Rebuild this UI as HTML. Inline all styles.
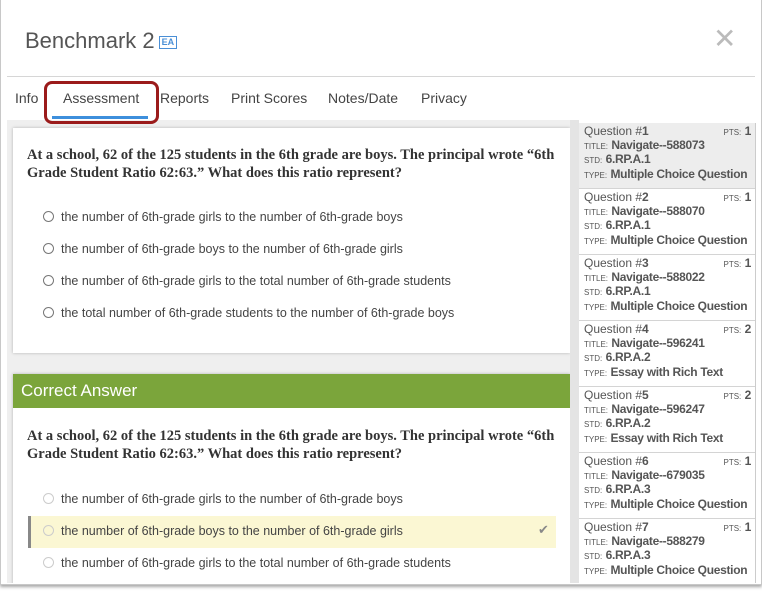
<!DOCTYPE html>
<html><head><meta charset="utf-8"><style>
*{margin:0;padding:0;box-sizing:border-box}
body{width:762px;height:591px;background:#fff;font-family:"Liberation Sans",sans-serif;position:relative;overflow:hidden}
.abs{position:absolute}
.modal{left:0;top:0;width:762px;height:585px;border:1px solid #c8c8c8;border-top:none;box-shadow:0 2px 3px rgba(0,0,0,.35);background:#fff}
.title{left:25px;top:28px;font-size:22px;color:#555}
.ea{display:inline-block;border:1.5px solid #4a8fd6;color:#4a8fd6;font-size:9px;font-weight:bold;padding:0 2px;vertical-align:3px;margin-left:4px;line-height:11px}
.close{left:713px;top:22px;font-size:28px;color:#bbb;font-weight:300}
.hline{left:7px;top:76px;width:748px;height:1px;background:#d6d6d6}
.tab{top:90px;font-size:14px;color:#444}
.clip{left:7px;top:120px;width:570px;height:463px;background:#efefef;overflow:hidden}
.card{background:#fff;box-shadow:0 0 3px rgba(0,0,0,.25)}
.q{font-family:"Liberation Serif",serif;font-weight:bold;font-size:14.5px;color:#333;line-height:18px}
.opt{font-size:12.5px;color:#444;position:absolute;left:29px;white-space:nowrap}
.radio{position:absolute;left:-18px;top:1px;width:11px;height:11px;border:1px solid #777;border-radius:50%}
.side{left:579px;top:123px;width:177px;height:460px;border-right:1px solid #ccc;overflow:hidden}
.item{height:66px;border-bottom:1px solid #d4d4d4;padding:2px 5px;font-size:12px;color:#555;line-height:13.5px;position:relative;white-space:nowrap;overflow:hidden}
.item b{color:#555;font-size:12px;letter-spacing:-0.3px}
.sm{font-size:8px;font-weight:normal}
.pts{position:absolute;right:4px;top:2px;font-size:12px}
</style></head><body>
<div class="abs modal"></div>
<div class="abs title">Benchmark 2<span class="ea">EA</span></div>
<div class="abs close">✕</div>
<div class="abs hline"></div>
<div class="abs tab" style="left:15px">Info</div>
<div class="abs tab" style="left:63px">Assessment</div>
<div class="abs tab" style="left:160px">Reports</div>
<div class="abs tab" style="left:231px">Print Scores</div>
<div class="abs tab" style="left:328px">Notes/Date</div>
<div class="abs tab" style="left:421px">Privacy</div>
<div class="abs clip">
<div class="abs card" style="left:6px;top:8px;width:557px;height:225px">
 <div class="q abs" style="left:14px;top:18px;width:540px">At a school, 62 of the 125 students in the 6th grade are boys. The principal wrote “6th Grade Student Ratio 62:63.” What does this ratio represent?</div>
 <div class="opt" style="left:48px;top:82px"><span class="radio"></span>the number of 6th-grade girls to the number of 6th-grade boys</div>
 <div class="opt" style="left:48px;top:114px"><span class="radio"></span>the number of 6th-grade boys to the number of 6th-grade girls</div>
 <div class="opt" style="left:48px;top:146px"><span class="radio"></span>the number of 6th-grade girls to the total number of 6th-grade students</div>
 <div class="opt" style="left:48px;top:178px"><span class="radio"></span>the total number of 6th-grade students to the number of 6th-grade boys</div>
</div>
<div class="abs card" style="left:6px;top:254px;width:557px;height:230px">
 <div style="background:#7ba53b;height:34px;color:#fff;font-size:17px;padding:7px 8px">Correct Answer</div>
 <div class="q abs" style="left:14px;top:53px;width:540px">At a school, 62 of the 125 students in the 6th grade are boys. The principal wrote “6th Grade Student Ratio 62:63.” What does this ratio represent?</div>
 <div class="abs" style="left:15px;top:142px;width:528px;height:32px;background:#fbf7d3;border-left:3px solid #888"></div>
 <div class="opt" style="left:48px;top:118px"><span class="radio" style="border-color:#ccc"></span>the number of 6th-grade girls to the number of 6th-grade boys</div>
 <div class="opt" style="left:48px;top:150px"><span class="radio" style="border-color:#ccc"></span>the number of 6th-grade boys to the number of 6th-grade girls</div>
 <div class="abs" style="left:525px;top:148px;color:#888;font-size:13px">✔</div>
 <div class="opt" style="left:48px;top:182px"><span class="radio" style="border-color:#ccc"></span>the number of 6th-grade girls to the total number of 6th-grade students</div>
</div>
</div>
<div class="abs" style="left:52px;top:116px;width:96px;height:3px;background:#3d8fdc"></div>
<div class="abs" style="left:44px;top:81px;width:115px;height:43px;border:3px solid #9b1b1b;border-radius:8px"></div>
<div class="abs" style="left:570px;top:120px;width:9px;height:463px;background:#e4e4e4"></div>
<div class="abs side">
 <div class="item" style="background:#ededed">Question #<b>1</b><span class="pts"><span class="sm">PTS:</span> <b>1</b></span><br><span class="sm">TITLE:</span> <b>Navigate--588073</b><br><span class="sm">STD:</span> <b>6.RP.A.1</b><br><span class="sm">TYPE:</span> <b>Multiple Choice Question</b></div>
 <div class="item">Question #<b>2</b><span class="pts"><span class="sm">PTS:</span> <b>1</b></span><br><span class="sm">TITLE:</span> <b>Navigate--588070</b><br><span class="sm">STD:</span> <b>6.RP.A.1</b><br><span class="sm">TYPE:</span> <b>Multiple Choice Question</b></div>
 <div class="item">Question #<b>3</b><span class="pts"><span class="sm">PTS:</span> <b>1</b></span><br><span class="sm">TITLE:</span> <b>Navigate--588022</b><br><span class="sm">STD:</span> <b>6.RP.A.1</b><br><span class="sm">TYPE:</span> <b>Multiple Choice Question</b></div>
 <div class="item">Question #<b>4</b><span class="pts"><span class="sm">PTS:</span> <b>2</b></span><br><span class="sm">TITLE:</span> <b>Navigate--596241</b><br><span class="sm">STD:</span> <b>6.RP.A.2</b><br><span class="sm">TYPE:</span> <b>Essay with Rich Text</b></div>
 <div class="item">Question #<b>5</b><span class="pts"><span class="sm">PTS:</span> <b>2</b></span><br><span class="sm">TITLE:</span> <b>Navigate--596247</b><br><span class="sm">STD:</span> <b>6.RP.A.2</b><br><span class="sm">TYPE:</span> <b>Essay with Rich Text</b></div>
 <div class="item">Question #<b>6</b><span class="pts"><span class="sm">PTS:</span> <b>1</b></span><br><span class="sm">TITLE:</span> <b>Navigate--679035</b><br><span class="sm">STD:</span> <b>6.RP.A.3</b><br><span class="sm">TYPE:</span> <b>Multiple Choice Question</b></div>
 <div class="item">Question #<b>7</b><span class="pts"><span class="sm">PTS:</span> <b>1</b></span><br><span class="sm">TITLE:</span> <b>Navigate--588279</b><br><span class="sm">STD:</span> <b>6.RP.A.3</b><br><span class="sm">TYPE:</span> <b>Multiple Choice Question</b></div>
</div>
</body></html>
